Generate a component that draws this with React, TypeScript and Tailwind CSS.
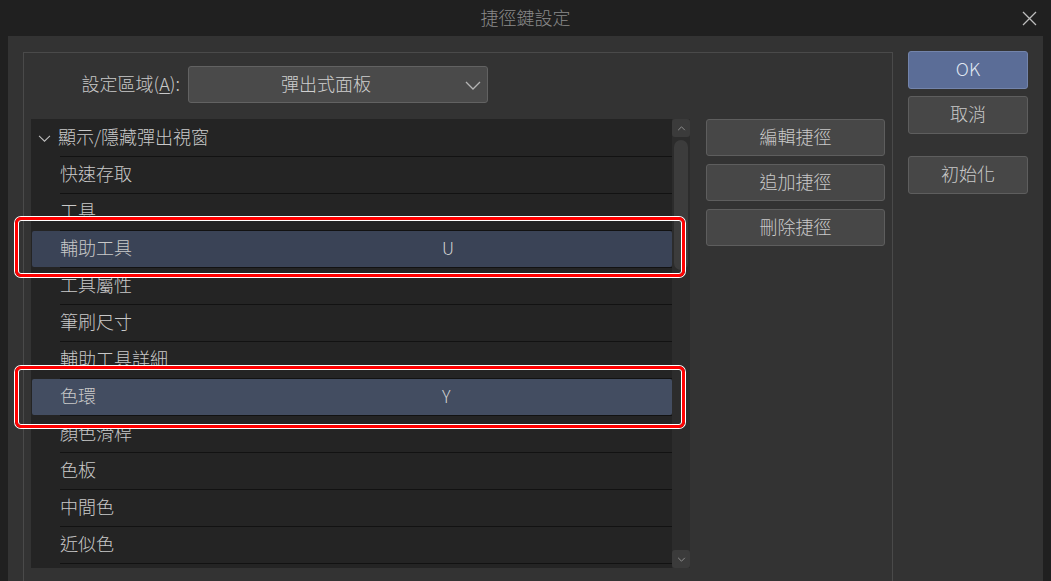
import React from "react";

const FONT = { fontFamily: '"Noto Sans CJK TC", "Noto Sans", sans-serif' };

type Row = { name: string; key?: string; sel?: 1 | 2 };

const rows: Row[] = [
  { name: "快速存取" },
  { name: "工具" },
  { name: "輔助工具", key: "U", sel: 1 },
  { name: "工具屬性" },
  { name: "筆刷尺寸" },
  { name: "輔助工具詳細" },
  { name: "色環", key: "Y", sel: 2 },
  { name: "顏色滑桿" },
  { name: "色板" },
  { name: "中間色" },
  { name: "近似色" },
  { name: "" },
];

function Chevron({ className }: { className?: string }) {
  return (
    <svg className={className} viewBox="0 0 16 9" fill="none">
      <path d="M1 1 L8 8 L15 1" stroke="currentColor" strokeWidth="1.3" />
    </svg>
  );
}

function Btn({
  children,
  primary,
  h38,
}: {
  children: React.ReactNode;
  primary?: boolean;
  h38?: boolean;
}) {
  return (
    <div
      className={
        "flex w-full items-center justify-center rounded-[3px] border pb-[3px] text-[18px] font-light " +
        (h38 ? "h-[38px] " : "h-[37px] ") +
        (primary
          ? "border-[#7384ab] bg-[#5b6d97] text-[#dfe5f0]"
          : "border-[#5e5e5e] bg-[#474747] text-[#c9c9c9]")
      }
    >
      {children}
    </div>
  );
}

export default function App() {
  return (
    <div
      className="relative flex h-[581px] w-[1051px] flex-col overflow-hidden bg-[#202020]"
      style={FONT}
    >
      {/* Title bar */}
      <div className="relative flex h-[36px] shrink-0 items-center justify-center pb-[2px]">
        <span className="text-[18px] font-light text-[#8a8a8a]">捷徑鍵設定</span>
        <svg className="absolute right-[14px] top-[11px] h-[15px] w-[15px]" viewBox="0 0 15 15">
          <path d="M1 1 L14 14 M14 1 L1 14" stroke="#bdbdbd" strokeWidth="1.3" />
        </svg>
      </div>

      {/* Body */}
      <div className="mx-[8px] flex flex-1 bg-[#333333]">
        {/* Group box */}
        <div className="ml-[15px] mt-[16px] h-[600px] w-[870px] shrink-0 border border-[#4a4a4a] px-[7px]">
          {/* Dropdown row */}
          <div className="mt-[13px] flex h-[37px] items-center">
            <div className="w-[157px] pb-[3px] pr-[8px] text-right text-[18px] font-light text-[#c9c9c9]">
              設定區域(<span className="underline underline-offset-2">A</span>):
            </div>
            <div className="relative flex h-[37px] w-[300px] items-center justify-center rounded-[3px] border border-[#626262] bg-[#4a4a4a] pb-[3px] pr-[24px] text-[18px] font-light text-[#cfcfcf]">
              彈出式面板
              <Chevron className="absolute right-[6px] top-[14px] h-[9px] w-[16px] text-[#b5b5b5]" />
            </div>
          </div>

          <div className="mt-[16px] flex">
            {/* List */}
            <div className="flex h-[449px] w-[659px] shrink-0 overflow-hidden bg-[#242424]">
              <div className="w-[641px] shrink-0 pt-[1px]">
                <div className="flex h-[36px] items-center pb-[3px] text-[18px] font-light text-[#c9c9c9]">
                  <Chevron className="ml-[7px] mr-[7px] mt-[4px] h-[7px] w-[13px] text-[#c0c0c0]" />
                  <span>顯示/隱藏彈出視窗</span>
                </div>
                <div className="ml-[29px] h-px bg-[#121212]" />
                {rows.map((r, i) => (
                  <div key={i}>
                    <div
                      className={
                        "flex h-[36px] items-center pb-[3px] text-[18px] font-light text-[#c9c9c9] " +
                        (r.sel === 1
                          ? "ml-[1px] rounded-[2px] bg-[#3a4356] pl-[28px]"
                          : r.sel === 2
                          ? "ml-[1px] rounded-[2px] bg-[#434d61] pl-[28px]"
                          : "pl-[29px]")
                      }
                    >
                      <span className="w-[382px] shrink-0">{r.name}</span>
                      {r.key && <span className="text-[17px] text-[#d0d0d0]">{r.key}</span>}
                    </div>
                    <div className="ml-[29px] h-px bg-[#121212]" />
                  </div>
                ))}
              </div>
              {/* Scrollbar */}
              <div className="flex w-[18px] shrink-0 flex-col bg-[#2c2c2c]">
                <div className="flex h-[18px] items-center justify-center rounded-[3px] bg-[#3b3b3b]">
                  <svg viewBox="0 0 10 6" className="h-[5px] w-[9px]">
                    <path d="M1 5 L5 1 L9 5" stroke="#8e8e8e" strokeWidth="1.2" fill="none" />
                  </svg>
                </div>
                <div className="mx-[2px] mt-[3px] h-[130px] rounded-full bg-[#3c3c3c]" />
                <div className="flex-1" />
                <div className="flex h-[18px] items-center justify-center rounded-[3px] bg-[#3b3b3b]">
                  <svg viewBox="0 0 10 6" className="h-[5px] w-[9px]">
                    <path d="M1 1 L5 5 L9 1" stroke="#8e8e8e" strokeWidth="1.2" fill="none" />
                  </svg>
                </div>
              </div>
            </div>

            {/* Edit buttons */}
            <div className="ml-[16px] flex w-[180px] flex-col gap-[8px]">
              <Btn>編輯捷徑</Btn>
              <Btn>追加捷徑</Btn>
              <Btn>刪除捷徑</Btn>
            </div>
          </div>
        </div>

        {/* Right column */}
        <div className="ml-[15px] mt-[15px] flex w-[120px] flex-col">
          <Btn primary h38>
            OK
          </Btn>
          <div className="mt-[7px]">
            <Btn h38>取消</Btn>
          </div>
          <div className="mt-[22px]">
            <Btn h38>初始化</Btn>
          </div>
        </div>
      </div>

      {/* Annotation boxes */}
      <div className="pointer-events-none absolute left-[15px] top-[217px] h-[60px] w-[670px] rounded-[6px] border-[3px] border-[#ff0000] shadow-[0_0_0_1px_#ffffff,inset_0_0_0_1px_#ffffff]" />
      <div className="pointer-events-none absolute left-[15px] top-[366px] h-[62px] w-[670px] rounded-[6px] border-[3px] border-[#ff0000] shadow-[0_0_0_1px_#ffffff,inset_0_0_0_1px_#ffffff]" />
    </div>
  );
}
